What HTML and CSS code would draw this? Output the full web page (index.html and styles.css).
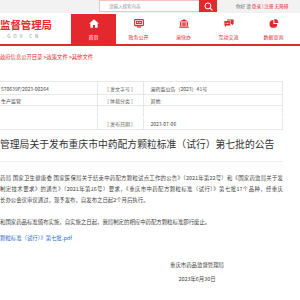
FILE: index.html
```html
<!DOCTYPE html>
<html lang="zh-CN">

<head>
    <meta charset="UTF-8">
    <meta name="viewport" content="width=device-width, initial-scale=1.0">
    <title>重庆市药品监督管理局</title>
    <link rel="stylesheet" href="styles.css">
</head>

<body>
    <div class="topbar">
        <div class="search"><span>请输入搜索内容</span></div>
        <div class="search-btn">
            <svg width="9" height="9" viewBox="0 0 10 10">
                <circle cx="4.4" cy="4.4" r="3.3" fill="none" stroke="#fff" stroke-width="1.1" />
                <path d="M6.8 6.8 L9 9" stroke="#fff" stroke-width="1.2" stroke-linecap="round" />
            </svg>
        </div>
        <div class="user">你好 请 <a>登录</a> | <a>注册</a> <a>无障碍</a></div>
    </div>

    <div class="header">
        <div class="logo">
            <div class="logo-cn">监督管理局</div>
            <div class="logo-en">.GOV.CN</div>
        </div>
        <ul class="nav">
            <li class="on">
                <svg width="10" height="9" viewBox="0 0 10 9">
                    <path d="M5 0.3 L9.8 4.6 L8.6 4.6 L8.6 8.8 L6 8.8 L6 6 L4 6 L4 8.8 L1.4 8.8 L1.4 4.6 L0.2 4.6 Z" fill="#fff" />
                </svg>
                <i>首页</i>
            </li>
            <li>
                <svg width="10" height="9" viewBox="0 0 10 9">
                    <rect x="0.6" y="0.6" width="8.8" height="6" rx="0.6" fill="none" stroke="#e3292d" stroke-width="1.1" />
                    <rect x="2" y="2" width="6" height="3.2" fill="#e3292d" />
                    <circle cx="3.6" cy="3.4" r="0.7" fill="#fff" />
                    <rect x="5" y="3" width="2.2" height="0.7" fill="#fff" />
                    <rect x="3" y="7.4" width="4" height="1.2" fill="#e3292d" />
                </svg>
                <i>政务公开</i>
            </li>
            <li>
                <svg width="10" height="9" viewBox="0 0 10 9">
                    <path d="M5 0.2 L9.6 2.6 L0.4 2.6 Z" fill="#e3292d" />
                    <rect x="1" y="3.2" width="1.4" height="3.8" fill="#e3292d" />
                    <rect x="3.4" y="3.2" width="1.4" height="3.8" fill="#e3292d" />
                    <rect x="5.2" y="3.2" width="1.4" height="3.8" fill="#e3292d" />
                    <rect x="7.6" y="3.2" width="1.4" height="3.8" fill="#e3292d" />
                    <rect x="0.3" y="7.5" width="9.4" height="1.3" fill="#e3292d" />
                </svg>
                <i>渝快办</i>
            </li>
            <li>
                <svg width="10" height="9" viewBox="0 0 10 9">
                    <path d="M0.4 2 L6.4 2 L6.4 6.4 L2.6 6.4 L0.8 8.2 L1.2 6.4 L0.4 6.4 Z" fill="#e3292d" />
                    <path d="M3 0.4 L9.6 0.4 L9.6 5 L8.8 5 L9.2 6.6 L7.4 5 L7 5 L7 1.6 L3 1.6 Z" fill="#e3292d" />
                    <rect x="1.6" y="3.8" width="0.9" height="0.9" fill="#fff" />
                    <rect x="3" y="3.8" width="0.9" height="0.9" fill="#fff" />
                    <rect x="4.4" y="3.8" width="0.9" height="0.9" fill="#fff" />
                </svg>
                <i>互动交流</i>
            </li>
            <li>
                <svg width="10" height="9" viewBox="0 0 10 9">
                    <path d="M4.4 1 A3.9 3.9 0 1 0 8.3 4.9 L4.4 4.9 Z" fill="#e3292d" />
                    <path d="M5.4 0 A3.9 3.9 0 0 1 9.3 3.9 L5.4 3.9 Z" fill="#e3292d" />
                </svg>
                <i>数据查询</i>
            </li>
        </ul>
    </div>
    <div class="redline"></div>

    <div class="crumb">政府信息公开目录 &gt;政策文件 &gt;其他文件</div>

    <table class="info">
        <tr class="r1">
            <td class="c1">570639F/2023-00264</td>
            <td class="c2">[ 发文字号 ]</td>
            <td class="c3">渝药监公告〔2023〕41号</td>
        </tr>
        <tr class="r2">
            <td class="c1">生产监管</td>
            <td class="c2">[ 体裁分类 ]</td>
            <td class="c3">其他</td>
        </tr>
        <tr class="r3">
            <td class="c1"></td>
            <td class="c2"></td>
            <td class="c3"></td>
        </tr>
        <tr class="r4">
            <td class="c1"></td>
            <td class="c2">[ 发布日期 ]</td>
            <td class="c3">2023-07-06</td>
        </tr>
    </table>

    <h1 class="title">管理局关于发布重庆市中药配方颗粒标准（试行）第七批的公告</h1>

    <div class="content">
        <p>
            <span class="ln">药局 国家卫生健康委 国家医保局关于结束中药配方颗粒试点工作的公告》（2021年第22号）和《国家药监局关于发</span>
            <span class="ln">制定技术要求》的通告》（2021年第16号）要求，《重庆市中药配方颗粒标准（试行）》第七批17个品种，经重庆</span>
            <span>长办公会议审议通过，现予发布，自发布之日起2个月后执行。</span>
        </p>
        <p class="p2">和国家药品标准颁布实施，自实施之日起，我局制定的相应中药配方颗粒标准即行废止。</p>
        <p class="attach"><a>颗粒标准（试行）》第七批.pdf</a></p>
        <div class="sign">
            <p>重庆市药品监督管理局</p>
            <p>2023年6月30日</p>
        </div>
    </div>
</body>

</html>
```

FILE: styles.css
```css
* {
    margin: 0;
    padding: 0;
    box-sizing: border-box;
}

body {
    width: 300px;
    height: 300px;
    overflow: hidden;
    background: #fff;
    font-family: "Microsoft YaHei", "Noto Sans CJK SC", sans-serif;
    color: #333;
}

li {
    list-style: none;
}

i {
    font-style: normal;
}

a {
    text-decoration: none;
}

.topbar {
    display: flex;
    align-items: flex-start;
    height: 13px;
    background: #f2f2f2;
}

.search {
    margin-left: 99px;
    width: 100px;
    height: 12px;
    border: 1px solid #f3c2c2;
    border-right: 0;
    background: #fff;
    font-size: 4.5px;
    line-height: 10px;
    color: #999;
    padding-left: 9px;
}

.search-btn {
    width: 18px;
    height: 12px;
    background: #e3292d;
    display: flex;
    align-items: center;
    justify-content: center;
}

.user {
    margin-left: 19px;
    font-size: 4.6px;
    line-height: 12px;
    color: #666;
    white-space: nowrap;
}

.user a {
    color: #e3292d;
}

.header {
    display: flex;
    height: 31px;
}

.logo {
    width: 71px;
    padding-top: 6px;
}

.logo-cn {
    font-size: 10.4px;
    line-height: 12px;
    font-weight: bold;
    color: #e3292d;
    white-space: nowrap;
}

.logo-en {
    margin-top: 2px;
    margin-left: 3px;
    font-size: 4.5px;
    line-height: 6px;
    letter-spacing: 3px;
    color: #8a8a8a;
}

.nav {
    display: flex;
    padding-top: 1px;
}

.nav li {
    width: 45px;
    display: flex;
    flex-direction: column;
    align-items: center;
    padding-top: 5px;
    font-size: 5px;
    line-height: 6px;
    color: #e3292d;
}

.nav li svg {
    display: block;
    margin-bottom: 6px;
}

.nav li.on {
    background: #e3292d;
    color: #fff;
}

.redline {
    height: 2px;
    background: #e3292d;
}

.crumb {
    margin-top: 8px;
    font-size: 5.3px;
    line-height: 7px;
    color: #e3292d;
    white-space: nowrap;
}

.info {
    margin-top: 20px;
    width: 283px;
    border-collapse: collapse;
    font-size: 5px;
    color: #444;
    table-layout: fixed;
}

.info td {
    border: 1px solid #e8e8e8;
    padding: 0;
    white-space: nowrap;
    overflow: hidden;
}

.info .c1 {
    width: 97px;
    border-left: 0;
    padding-left: 1px;
}

.info .c2 {
    width: 46px;
    text-align: center;
    color: #666;
}

.info .c3 {
    padding-left: 7px;
}

.info .r1 td {
    height: 13px;
}

.info .r2 td {
    height: 11px;
}

.info .r3 td {
    height: 12px;
    border-bottom-color: #fff;
}

.info .r4 td {
    height: 12px;
}

.title {
    margin-top: 7px;
    width: 283px;
    padding-bottom: 10px;
    border-bottom: 1px solid #eee;
    font-size: 9.8px;
    line-height: 14px;
    font-weight: normal;
    color: #333;
    white-space: nowrap;
}

.content {
    width: 283px;
    font-size: 5.4px;
    line-height: 11px;
    color: #444;
}

.content > p:first-child {
    margin-top: 11px;
}

.ln {
    display: block;
    white-space: nowrap;
    text-align: justify;
    text-align-last: justify;
}

.p2 {
    margin-top: 11px;
}

.attach {
    margin-top: 5px;
}

.attach a {
    color: #2b6cc4;
}

.sign {
    margin-top: 14px;
    margin-left: 145px;
    width: 104px;
    text-align: center;
    line-height: 14px;
}
```
